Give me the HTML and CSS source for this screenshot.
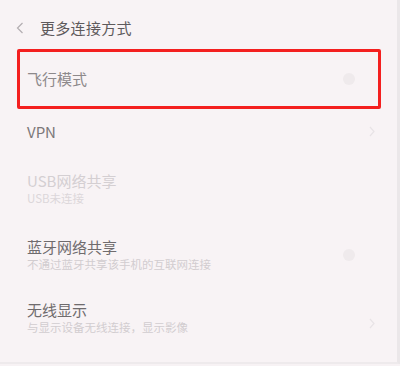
FILE: index.html
```html
<!DOCTYPE html>
<html lang="zh">
<head>
<meta charset="utf-8">
<link rel="stylesheet" href="styles.css">
</head>
<body>
<div class="screen">
  <div class="header">
    <svg class="back" width="8" height="12" viewBox="0 0 8 12"><path d="M6.5 1 L1.5 6 L6.5 11" fill="none" stroke="#b3aeb1" stroke-width="1.2"/></svg>
    <span class="title">更多连接方式</span>
  </div>
  <div class="row row-air">
    <div class="highlight">
      <span class="label">飞行模式</span>
      <span class="knob"></span>
    </div>
  </div>
  <div class="row row-vpn">
    <span class="label">VPN</span>
    <svg class="chev" width="6" height="11" viewBox="0 0 6 11"><path d="M1 1 L5 5.5 L1 10" fill="none" stroke="#e8e3e6" stroke-width="1.2"/></svg>
  </div>
  <div class="row row-usb">
    <div class="texts">
      <span class="label disabled">USB网络共享</span>
      <span class="sub disabled">USB未连接</span>
    </div>
  </div>
  <div class="row row-bt">
    <div class="texts">
      <span class="label">蓝牙网络共享</span>
      <span class="sub">不通过蓝牙共享该手机的互联网连接</span>
    </div>
    <span class="knob"></span>
  </div>
  <div class="row row-wd">
    <div class="texts">
      <span class="label">无线显示</span>
      <span class="sub">与显示设备无线连接，显示影像</span>
    </div>
    <svg class="chev" width="6" height="11" viewBox="0 0 6 11"><path d="M1 1 L5 5.5 L1 10" fill="none" stroke="#e8e3e6" stroke-width="1.2"/></svg>
  </div>
</div>
</body>
</html>
```
FILE: styles.css
```css
html, body {
  margin: 0;
  padding: 0;
  width: 400px;
  height: 366px;
  overflow: hidden;
  background: #f7f2f4;
  font-family: "Noto Sans CJK SC", "Noto Sans", sans-serif;
}
.screen {
  width: 397px;
  height: 362px;
  border-right: 3px solid #ebe7e9;
  border-bottom: 2px solid #eeeaec;
  background: #f8f3f5;
  display: flex;
  flex-direction: column;
}
.header {
  height: 49px;
  display: flex;
  align-items: center;
  padding-left: 16px;
  box-sizing: border-box;
  padding-top: 6px;
}
.back { margin-right: 16px; }
.title {
  font-size: 15px;
  color: #5e5a5c;
  letter-spacing: 0.3px;
}
.row {
  display: flex;
  align-items: center;
  box-sizing: border-box;
  padding-left: 27px;
  padding-right: 22px;
  justify-content: space-between;
}
.row-air {
  height: 60px;
  padding-left: 17px;
  padding-right: 16px;
}
.highlight {
  flex: 1;
  height: 60px;
  box-sizing: border-box;
  border: 3px solid #f41f1f;
  border-radius: 2px;
  display: flex;
  align-items: center;
  justify-content: space-between;
  padding-left: 7px;
  padding-right: 23px;
}
.label {
  font-size: 15px;
  line-height: 18px;
  color: #6f6b6d;
}
.row-air .label { color: #8d898b; }
.knob {
  width: 12px;
  height: 12px;
  border-radius: 50%;
  background: #efeaec;
}
.row-vpn { height: 45px; }
.row-vpn .label { color: #7c787a; }
.row-usb { height: 70px; }
.row-bt { height: 62px; padding-right: 42px; }
.row-wd { height: 64px; padding-right: 22px; }
.texts {
  display: flex;
  flex-direction: column;
  gap: 1px;
}
.sub {
  font-size: 11.5px;
  line-height: 15px;
  color: #d2cdd0;
}
.sub.disabled { color: #dcd7da; }
.label.disabled { color: #d4cfd2; }
.row-wd .chev { margin-top: 10px; }
```
